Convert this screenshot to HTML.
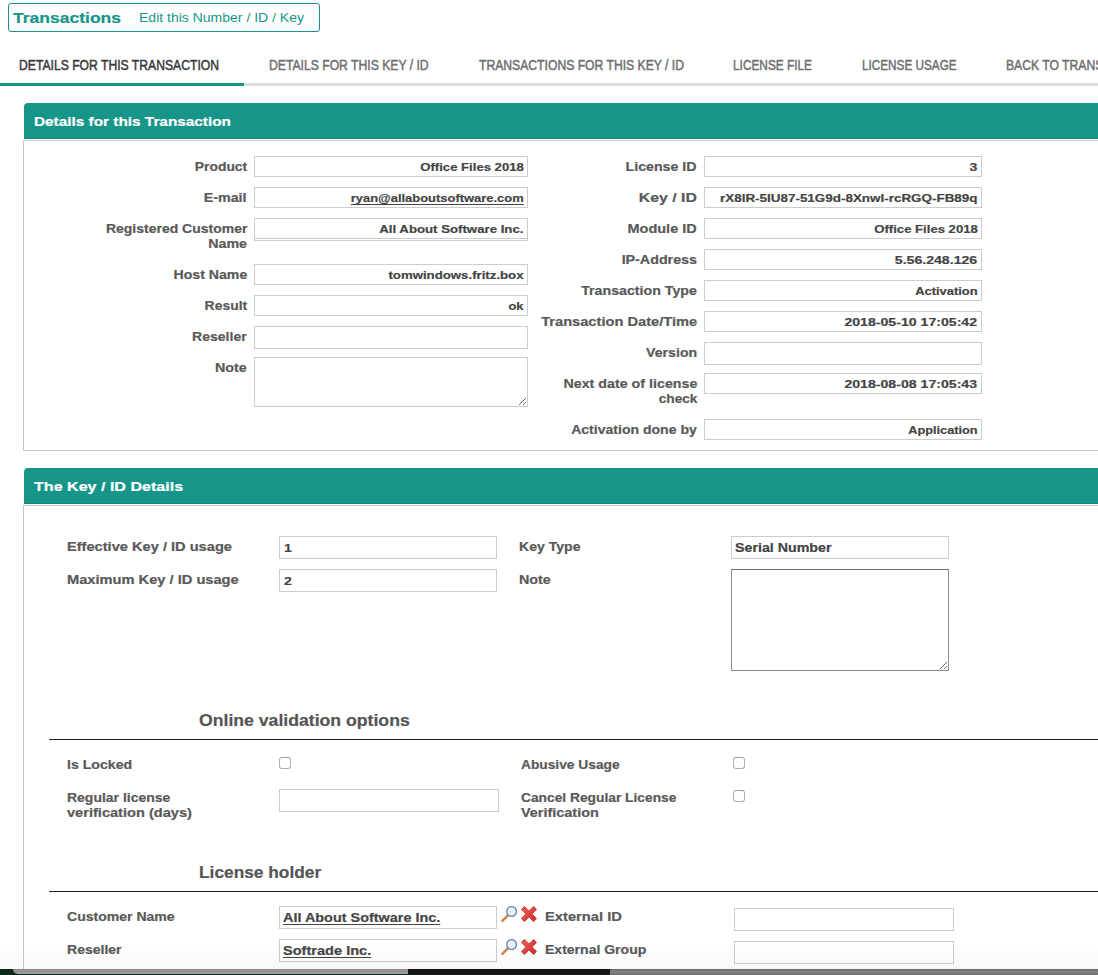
<!DOCTYPE html>
<html><head><meta charset="utf-8"><title>Transactions</title>
<style>
html,body{margin:0;padding:0;background:#fff}
body{width:1098px;height:975px;overflow:hidden;position:relative;font-family:"Liberation Sans",sans-serif}
#p{position:absolute;left:0;top:0;width:1098px;height:975px;overflow:hidden;background:#fff}
.t{position:absolute;white-space:nowrap;line-height:20px;height:20px;font-weight:bold;-webkit-text-stroke:0.2px currentColor}
.b{position:absolute;border:1px solid #ccc;background:#fff}
</style></head><body><div id="p">
<div style="position:absolute;left:8px;top:3px;width:310px;height:27px;border:1px solid #169588;border-radius:3px"></div>
<div class="t" style="top:8px;font-size:15.5px;color:#169588;transform:scaleX(1.1295);left:13.3px;transform-origin:0 0;">Transactions</div>
<div class="t" style="top:8px;font-size:12.5px;color:#169588;transform:scaleX(1.1204);font-weight:normal;-webkit-text-stroke:0;left:138.7px;transform-origin:0 0;">Edit this Number / ID / Key</div>
<div style="position:absolute;left:0;top:83px;width:1098px;height:3px;background:#dedede"></div>
<div style="position:absolute;left:0;top:83px;width:244px;height:3px;background:#169588"></div>
<div class="t" style="top:55px;font-size:14px;color:#3a3a3a;transform:scaleX(0.8686);font-weight:normal;-webkit-text-stroke:0;left:19px;transform-origin:0 0;-webkit-text-stroke:0.48px #3a3a3a;">DETAILS FOR THIS TRANSACTION</div>
<div class="t" style="top:55px;font-size:14px;color:#707070;transform:scaleX(0.8693);font-weight:normal;-webkit-text-stroke:0;left:269px;transform-origin:0 0;-webkit-text-stroke:0.48px #707070;">DETAILS FOR THIS KEY / ID</div>
<div class="t" style="top:55px;font-size:14px;color:#707070;transform:scaleX(0.8688);font-weight:normal;-webkit-text-stroke:0;left:478.5px;transform-origin:0 0;-webkit-text-stroke:0.48px #707070;">TRANSACTIONS FOR THIS KEY / ID</div>
<div class="t" style="top:55px;font-size:14px;color:#707070;transform:scaleX(0.8461);font-weight:normal;-webkit-text-stroke:0;left:733.3px;transform-origin:0 0;-webkit-text-stroke:0.48px #707070;">LICENSE FILE</div>
<div class="t" style="top:55px;font-size:14px;color:#707070;transform:scaleX(0.8385);font-weight:normal;-webkit-text-stroke:0;left:861.7px;transform-origin:0 0;-webkit-text-stroke:0.48px #707070;">LICENSE USAGE</div>
<div class="t" style="top:55px;font-size:14px;color:#707070;transform:scaleX(0.8688);font-weight:normal;-webkit-text-stroke:0;left:1006.3px;transform-origin:0 0;-webkit-text-stroke:0.48px #707070;">BACK TO TRANSACTIONS</div>
<div style="position:absolute;left:24px;top:103px;width:1100px;height:35px;background:#169588;border-bottom:1px solid #0e8a7d;border-radius:4px 0 0 0"></div>
<div style="position:absolute;left:23px;top:140px;width:1100px;height:309px;border:1px solid #c8c8c8"></div>
<div class="t" style="top:112px;font-size:13.5px;color:#fff;transform:scaleX(1.1368);left:33.6px;transform-origin:0 0;">Details for this Transaction</div>
<div class="t" style="top:157px;font-size:12.5px;color:#595959;transform:scaleX(1.1110);right:851px;transform-origin:100% 0;">Product</div>
<div class="t" style="top:188px;font-size:12.5px;color:#595959;transform:scaleX(1.1430);right:851px;transform-origin:100% 0;">E-mail</div>
<div class="t" style="top:219px;font-size:12.5px;color:#595959;transform:scaleX(1.1194);right:851px;transform-origin:100% 0;">Registered Customer</div>
<div class="t" style="top:234px;font-size:12.5px;color:#595959;transform:scaleX(1.1406);right:851px;transform-origin:100% 0;">Name</div>
<div class="t" style="top:265px;font-size:12.5px;color:#595959;transform:scaleX(1.1304);right:851px;transform-origin:100% 0;">Host Name</div>
<div class="t" style="top:296px;font-size:12.5px;color:#595959;transform:scaleX(1.1148);right:851px;transform-origin:100% 0;">Result</div>
<div class="t" style="top:327px;font-size:12.5px;color:#595959;transform:scaleX(1.1219);right:851px;transform-origin:100% 0;">Reseller</div>
<div class="t" style="top:358px;font-size:12.5px;color:#595959;transform:scaleX(1.1461);right:851px;transform-origin:100% 0;">Note</div>
<div class="t" style="top:157px;font-size:12.5px;color:#595959;transform:scaleX(1.1358);right:401px;transform-origin:100% 0;">License ID</div>
<div class="t" style="top:188px;font-size:12.5px;color:#595959;transform:scaleX(1.2654);right:401px;transform-origin:100% 0;">Key / ID</div>
<div class="t" style="top:219px;font-size:12.5px;color:#595959;transform:scaleX(1.1595);right:401px;transform-origin:100% 0;">Module ID</div>
<div class="t" style="top:250px;font-size:12.5px;color:#595959;transform:scaleX(1.1420);right:401px;transform-origin:100% 0;">IP-Address</div>
<div class="t" style="top:281px;font-size:12.5px;color:#595959;transform:scaleX(1.1358);right:401px;transform-origin:100% 0;">Transaction Type</div>
<div class="t" style="top:312px;font-size:12.5px;color:#595959;transform:scaleX(1.1716);right:401px;transform-origin:100% 0;">Transaction Date/Time</div>
<div class="t" style="top:343px;font-size:12.5px;color:#595959;transform:scaleX(1.1317);right:401px;transform-origin:100% 0;">Version</div>
<div class="t" style="top:374px;font-size:12.5px;color:#595959;transform:scaleX(1.1409);right:401px;transform-origin:100% 0;">Next date of license</div>
<div class="t" style="top:389px;font-size:12.5px;color:#595959;transform:scaleX(1.0912);right:401px;transform-origin:100% 0;">check</div>
<div class="t" style="top:420px;font-size:12.5px;color:#595959;transform:scaleX(1.1239);right:401px;transform-origin:100% 0;">Activation done by</div>
<div class="b" style="left:254px;top:156px;width:272px;height:19px;border-color:#ccc;"></div>
<div class="t" style="top:157px;font-size:11.5px;color:#444;transform:scaleX(1.1400);right:574.5px;transform-origin:100% 0;">Office Files 2018</div>
<div class="b" style="left:254px;top:187px;width:272px;height:19px;border-color:#ccc;"></div>
<div class="t" style="top:188px;font-size:11.5px;color:#444;transform:scaleX(1.1253);text-decoration:underline;text-decoration-thickness:1px;text-underline-offset:1.5px;right:574.5px;transform-origin:100% 0;">ryan@allaboutsoftware.com</div>
<div class="b" style="left:254px;top:218px;width:272px;height:21px;border-color:#ccc;"></div>
<div class="t" style="top:219px;font-size:11.5px;color:#444;transform:scaleX(1.1493);right:574.5px;transform-origin:100% 0;">All About Software Inc.</div>
<div class="b" style="left:254px;top:264px;width:272px;height:19px;border-color:#ccc;"></div>
<div class="t" style="top:265px;font-size:11.5px;color:#444;transform:scaleX(1.1494);right:574.5px;transform-origin:100% 0;">tomwindows.fritz.box</div>
<div class="b" style="left:254px;top:295px;width:272px;height:19px;border-color:#ccc;"></div>
<div class="t" style="top:296px;font-size:11.5px;color:#444;transform:scaleX(1.1131);right:574.5px;transform-origin:100% 0;">ok</div>
<div class="b" style="left:254px;top:326px;width:272px;height:21px;border-color:#ccc;"></div>
<div style="position:absolute;left:254px;top:238px;width:274px;height:1px;background:#ccc"></div>
<div class="b" style="left:254px;top:357px;width:272px;height:48px;border-color:#ccc;"></div>
<div class="b" style="left:704px;top:156px;width:276px;height:19px;border-color:#ccc;"></div>
<div class="t" style="top:157px;font-size:11.5px;color:#444;transform:scaleX(1.2228);right:120.70000000000005px;transform-origin:100% 0;">3</div>
<div class="b" style="left:704px;top:187px;width:276px;height:19px;border-color:#ccc;"></div>
<div class="t" style="top:188px;font-size:11.5px;color:#444;transform:scaleX(1.1676);right:120.70000000000005px;transform-origin:100% 0;">rX8lR-5IU87-51G9d-8XnwI-rcRGQ-FB89q</div>
<div class="b" style="left:704px;top:218px;width:276px;height:19px;border-color:#ccc;"></div>
<div class="t" style="top:219px;font-size:11.5px;color:#444;transform:scaleX(1.1400);right:120.70000000000005px;transform-origin:100% 0;">Office Files 2018</div>
<div class="b" style="left:704px;top:249px;width:276px;height:19px;border-color:#ccc;"></div>
<div class="t" style="top:250px;font-size:11.5px;color:#444;transform:scaleX(1.2257);right:120.70000000000005px;transform-origin:100% 0;">5.56.248.126</div>
<div class="b" style="left:704px;top:280px;width:276px;height:19px;border-color:#ccc;"></div>
<div class="t" style="top:281px;font-size:11.5px;color:#444;transform:scaleX(1.1233);right:120.70000000000005px;transform-origin:100% 0;">Activation</div>
<div class="b" style="left:704px;top:311px;width:276px;height:19px;border-color:#ccc;"></div>
<div class="t" style="top:312px;font-size:11.5px;color:#444;transform:scaleX(1.2277);right:120.70000000000005px;transform-origin:100% 0;">2018-05-10 17:05:42</div>
<div class="b" style="left:704px;top:342px;width:276px;height:21px;border-color:#ccc;"></div>
<div class="b" style="left:704px;top:373px;width:276px;height:19px;border-color:#ccc;"></div>
<div class="t" style="top:374px;font-size:11.5px;color:#444;transform:scaleX(1.2277);right:120.70000000000005px;transform-origin:100% 0;">2018-08-08 17:05:43</div>
<div class="b" style="left:704px;top:419px;width:276px;height:19px;border-color:#ccc;"></div>
<div class="t" style="top:420px;font-size:11.5px;color:#444;transform:scaleX(1.1088);right:120.70000000000005px;transform-origin:100% 0;">Application</div>
<div style="position:absolute;left:24px;top:468px;width:1100px;height:35px;background:#169588;border-bottom:1px solid #0e8a7d;border-radius:4px 0 0 0"></div>
<div style="position:absolute;left:23px;top:505px;width:1100px;height:600px;border:1px solid #c8c8c8"></div>
<div class="t" style="top:477px;font-size:13.5px;color:#fff;transform:scaleX(1.1903);left:33.6px;transform-origin:0 0;">The Key / ID Details</div>
<div class="t" style="top:537px;font-size:12.5px;color:#595959;transform:scaleX(1.1696);left:67px;transform-origin:0 0;">Effective Key / ID usage</div>
<div class="t" style="top:570px;font-size:12.5px;color:#595959;transform:scaleX(1.1715);left:67px;transform-origin:0 0;">Maximum Key / ID usage</div>
<div class="b" style="left:279px;top:536px;width:216px;height:21px;border-color:#ccc;"></div>
<div class="t" style="top:538px;font-size:11.5px;color:#444;transform:scaleX(1.2228);left:284px;transform-origin:0 0;">1</div>
<div class="b" style="left:279px;top:569px;width:216px;height:21px;border-color:#ccc;"></div>
<div class="t" style="top:571px;font-size:11.5px;color:#444;transform:scaleX(1.2228);left:284px;transform-origin:0 0;">2</div>
<div class="t" style="top:537px;font-size:12.5px;color:#595959;transform:scaleX(1.1251);left:519px;transform-origin:0 0;">Key Type</div>
<div class="t" style="top:570px;font-size:12.5px;color:#595959;transform:scaleX(1.1461);left:519px;transform-origin:0 0;">Note</div>
<div class="b" style="left:731px;top:536px;width:216px;height:21px;border-color:#ccc;"></div>
<div class="t" style="top:538px;font-size:12.5px;color:#444;transform:scaleX(1.1385);left:735px;transform-origin:0 0;">Serial Number</div>
<div class="b" style="left:731px;top:569px;width:216px;height:100px;border-color:#8e8e8e;border-top-color:#6e6e6e;"></div>
<div class="t" style="top:711px;font-size:16px;color:#555;transform:scaleX(1.1026);left:199px;transform-origin:0 0;">Online validation options</div>
<div style="position:absolute;left:49px;top:739px;width:1100px;height:1px;background:#222"></div>
<div class="t" style="top:755px;font-size:12.5px;color:#595959;transform:scaleX(1.1294);left:67px;transform-origin:0 0;">Is Locked</div>
<div class="t" style="top:755px;font-size:12.5px;color:#595959;transform:scaleX(1.0999);left:521.3px;transform-origin:0 0;">Abusive Usage</div>
<div class="t" style="top:788px;font-size:12.5px;color:#595959;transform:scaleX(1.1183);left:67px;transform-origin:0 0;">Regular license</div>
<div class="t" style="top:803px;font-size:12.5px;color:#595959;transform:scaleX(1.1676);left:67px;transform-origin:0 0;">verification (days)</div>
<div class="t" style="top:788px;font-size:12.5px;color:#595959;transform:scaleX(1.1016);left:521.3px;transform-origin:0 0;">Cancel Regular License</div>
<div class="t" style="top:803px;font-size:12.5px;color:#595959;transform:scaleX(1.1547);left:521.3px;transform-origin:0 0;">Verification</div>
<div class="b" style="left:279px;top:789px;width:218px;height:21px;border-color:#ccc;"></div>
<div style="position:absolute;left:279px;top:757px;width:10px;height:10px;border:1px solid #adadad;border-top-color:#9c9c9c;border-radius:3px;background:#fff"></div>
<div style="position:absolute;left:733px;top:757px;width:10px;height:10px;border:1px solid #adadad;border-top-color:#9c9c9c;border-radius:3px;background:#fff"></div>
<div style="position:absolute;left:733px;top:790px;width:10px;height:10px;border:1px solid #adadad;border-top-color:#9c9c9c;border-radius:3px;background:#fff"></div>
<div class="t" style="top:863px;font-size:16px;color:#555;transform:scaleX(1.0817);left:199px;transform-origin:0 0;">License holder</div>
<div style="position:absolute;left:49px;top:891px;width:1100px;height:1px;background:#222"></div>
<div class="t" style="top:907px;font-size:12.5px;color:#595959;transform:scaleX(1.1227);left:67px;transform-origin:0 0;">Customer Name</div>
<div class="t" style="top:940px;font-size:12.5px;color:#595959;transform:scaleX(1.1219);left:67px;transform-origin:0 0;">Reseller</div>
<div class="b" style="left:279px;top:906px;width:216px;height:21px;border-color:#ccc;"></div>
<div class="t" style="top:908px;font-size:12.5px;color:#444;transform:scaleX(1.1535);text-decoration:underline;text-decoration-thickness:1px;text-underline-offset:2px;left:283px;transform-origin:0 0;">All About Software Inc.</div>
<div class="b" style="left:279px;top:939px;width:216px;height:21px;border-color:#ccc;"></div>
<div class="t" style="top:941px;font-size:12.5px;color:#444;transform:scaleX(1.1653);text-decoration:underline;text-decoration-thickness:1px;text-underline-offset:2px;left:283px;transform-origin:0 0;">Softrade Inc.</div>
<div class="t" style="top:907px;font-size:12.5px;color:#595959;transform:scaleX(1.1777);left:545.4px;transform-origin:0 0;">External ID</div>
<div class="t" style="top:940px;font-size:12.5px;color:#595959;transform:scaleX(1.1215);left:545.4px;transform-origin:0 0;">External Group</div>
<div class="b" style="left:734px;top:908px;width:218px;height:21px;border-color:#ccc;"></div>
<div class="b" style="left:734px;top:941px;width:218px;height:21px;border-color:#ccc;"></div>
<svg style="position:absolute;left:501px;top:906px" width="16" height="16" viewBox="0 0 16 16"><line x1="1.4" y1="14.8" x2="6.6" y2="9.6" stroke="#c98a3f" stroke-width="2.5" stroke-linecap="round"/><circle cx="10.6" cy="5.5" r="4.9" fill="#e3eef8" stroke="#6b86a3" stroke-width="1.3"/><path d="M7.6 5.2 A3.2 3.2 0 0 1 10.4 2.6" stroke="#fff" stroke-width="1.2" fill="none"/></svg>
<svg style="position:absolute;left:521px;top:906px" width="16" height="16" viewBox="0 0 16 16"><defs><linearGradient id="xg906" x1="0" y1="0" x2="1" y2="1" gradientUnits="objectBoundingBox"><stop offset="0" stop-color="#ee625a"/><stop offset="1" stop-color="#c92b27"/></linearGradient></defs><path d="M1.7 1.7 L14.3 14.3 M14.3 1.7 L1.7 14.3" stroke="#c63a35" stroke-width="4.8" stroke-linecap="butt"/><path d="M0.9 4.1 L4.1 0.9 L8 4.8 L11.9 0.9 L15.1 4.1 L11.2 8 L15.1 11.9 L11.9 15.1 L8 11.2 L4.1 15.1 L0.9 11.9 L4.8 8 Z" fill="url(#xg906)"/></svg>
<svg style="position:absolute;left:501px;top:939px" width="16" height="16" viewBox="0 0 16 16"><line x1="1.4" y1="14.8" x2="6.6" y2="9.6" stroke="#c98a3f" stroke-width="2.5" stroke-linecap="round"/><circle cx="10.6" cy="5.5" r="4.9" fill="#e3eef8" stroke="#6b86a3" stroke-width="1.3"/><path d="M7.6 5.2 A3.2 3.2 0 0 1 10.4 2.6" stroke="#fff" stroke-width="1.2" fill="none"/></svg>
<svg style="position:absolute;left:521px;top:939px" width="16" height="16" viewBox="0 0 16 16"><defs><linearGradient id="xg939" x1="0" y1="0" x2="1" y2="1" gradientUnits="objectBoundingBox"><stop offset="0" stop-color="#ee625a"/><stop offset="1" stop-color="#c92b27"/></linearGradient></defs><path d="M1.7 1.7 L14.3 14.3 M14.3 1.7 L1.7 14.3" stroke="#c63a35" stroke-width="4.8" stroke-linecap="butt"/><path d="M0.9 4.1 L4.1 0.9 L8 4.8 L11.9 0.9 L15.1 4.1 L11.2 8 L15.1 11.9 L11.9 15.1 L8 11.2 L4.1 15.1 L0.9 11.9 L4.8 8 Z" fill="url(#xg939)"/></svg>
<svg style="position:absolute;left:519px;top:398px" width="8" height="8" viewBox="0 0 8 8" shape-rendering="crispEdges"><path d="M0 6h1v1h-1z M1 5h1v1h-1z M2 4h1v1h-1z M3 3h1v1h-1z M4 2h1v1h-1z M5 1h1v1h-1z M6 0h1v1h-1z M4 6h1v1h-1z M5 5h1v1h-1z M6 4h1v1h-1z" fill="#666"/></svg>
<svg style="position:absolute;left:940px;top:662px" width="8" height="8" viewBox="0 0 8 8" shape-rendering="crispEdges"><path d="M0 6h1v1h-1z M1 5h1v1h-1z M2 4h1v1h-1z M3 3h1v1h-1z M4 2h1v1h-1z M5 1h1v1h-1z M6 0h1v1h-1z M4 6h1v1h-1z M5 5h1v1h-1z M6 4h1v1h-1z" fill="#666"/></svg>
<div style="position:absolute;left:0;top:944px;width:1098px;height:25px;background:linear-gradient(rgba(0,0,0,0),rgba(0,0,0,0.028));pointer-events:none"></div>
<div style="position:absolute;left:0;top:969px;width:1098px;height:6px;background:#0c2a1c"></div>
<div style="position:absolute;left:13px;top:969px;width:395px;height:5px;background:linear-gradient(#8a8a8a,#a0a0a0);border-radius:0 0 0 5px"></div>
<div style="position:absolute;left:408px;top:969px;width:202px;height:6px;background:#161616"></div>
<div style="position:absolute;left:610px;top:969px;width:488px;height:6px;background:linear-gradient(#6a6a6a,#858585 50%,#6e6e6e)"></div>
</div></body></html>
